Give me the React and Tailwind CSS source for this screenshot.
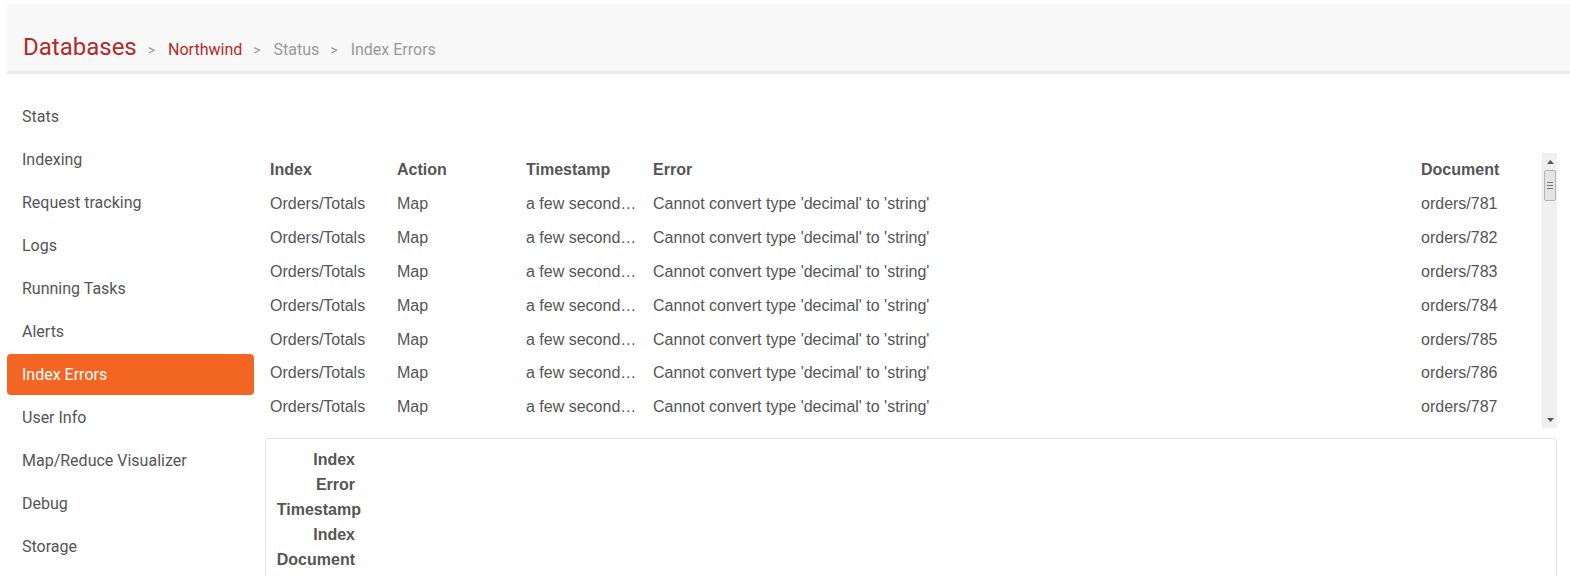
import React from "react";

const navItems = [
  "Stats",
  "Indexing",
  "Request tracking",
  "Logs",
  "Running Tasks",
  "Alerts",
  "Index Errors",
  "User Info",
  "Map/Reduce Visualizer",
  "Debug",
  "Storage",
];

const errors = [781, 782, 783, 784, 785, 786, 787].map((n) => ({
  index: "Orders/Totals",
  action: "Map",
  timestamp: "a few seconds ago",
  error: "Cannot convert type 'decimal' to 'string'",
  document: `orders/${n}`,
}));

function Sep() {
  return <span className="text-[14px] text-[#999] ml-[11px] mr-[13px]">&gt;</span>;
}

function Breadcrumb() {
  return (
    <div className="ml-[7px] mt-[5px] h-[69px] bg-[#f8f8f8] border-b-[3px] border-[#ebebeb] rounded-tl-[3px] flex items-baseline pt-[30px] pl-4 font-['Roboto',sans-serif]">
      <span className="text-[24px] leading-none text-[#b22a2a]">Databases</span>
      <Sep />
      <span className="text-[16px] leading-none text-[#b22a2a]">Northwind</span>
      <Sep />
      <span className="text-[16px] leading-none text-[#999]">Status</span>
      <Sep />
      <span className="text-[16px] leading-none text-[#999]">Index Errors</span>
    </div>
  );
}

function SideNav() {
  return (
    <nav className="w-[247px] ml-[7px] pt-[22px] flex flex-col gap-[2px] font-['Roboto',sans-serif] text-[16px]">
      {navItems.map((item) => (
        <div
          key={item}
          className={`h-[41px] flex items-center px-[15px] rounded-[4px] ${
            item === "Index Errors" ? "bg-[#f26522] text-white" : "text-[#555]"
          }`}
        >
          {item}
        </div>
      ))}
    </nav>
  );
}

function Scrollbar() {
  return (
    <div className="w-[15px] bg-[#f0f0f0] flex flex-col border-l border-[#e8e8e8]">
      <div className="h-[17px] flex items-center justify-center">
        <svg width="7" height="4" viewBox="0 0 7 4"><path d="M3.5 0L7 4H0z" fill="#555" /></svg>
      </div>
      <div className="h-[31px] mx-[1px] bg-[#e4e4e4] border border-[#b5b5b5] rounded-[2px] flex flex-col items-center justify-center gap-[2px]">
        <div className="w-[6px] h-px bg-[#777]" />
        <div className="w-[6px] h-px bg-[#777]" />
        <div className="w-[6px] h-px bg-[#777]" />
      </div>
      <div className="flex-1" />
      <div className="h-[17px] flex items-center justify-center">
        <svg width="7" height="4" viewBox="0 0 7 4"><path d="M0 0H7L3.5 4z" fill="#555" /></svg>
      </div>
    </div>
  );
}

function ErrorTable() {
  const cols = "grid grid-cols-[127px_129px_127px_1fr_121px]";
  return (
    <div className="flex h-[275px] font-['Liberation_Sans',Arial,sans-serif] text-[16px] text-[#555]">
      <div className="flex-1 pl-[8px] overflow-hidden">
        <div className={`${cols} h-[33px] items-center font-bold`}>
          <div>Index</div>
          <div>Action</div>
          <div>Timestamp</div>
          <div>Error</div>
          <div>Document</div>
        </div>
        {errors.map((e) => (
          <div key={e.document} className={`${cols} h-[33.8px] items-center pt-[3px]`}>
            <div>{e.index}</div>
            <div>{e.action}</div>
            <div className="truncate pr-[13px]">{e.timestamp}</div>
            <div>{e.error}</div>
            <div>{e.document}</div>
          </div>
        ))}
      </div>
      <Scrollbar />
    </div>
  );
}

function ErrorDetails() {
  const labels = ["Index", "Error", "Timestamp", "Index", "Document"];
  return (
    <div className="mt-[10px] ml-[3px] border border-[#e5e5e5] rounded-[4px] pt-[8px] pb-[10px] font-['Liberation_Sans',Arial,sans-serif] text-[16px] font-bold text-[#555]">
      <div className="w-[89px] flex flex-col items-end">
        {labels.map((l, i) => (
          <div key={i} className={`h-[25px] leading-[25px] ${l === "Timestamp" ? "mr-[-6px]" : ""}`}>
            {l}
          </div>
        ))}
      </div>
    </div>
  );
}

export default function App() {
  return (
    <div className="w-[1570px] h-[576px] overflow-hidden bg-white">
      <Breadcrumb />
      <div className="flex">
        <SideNav />
        <main className="ml-[8px] w-[1295px] pt-[79px]">
          <ErrorTable />
          <ErrorDetails />
        </main>
      </div>
    </div>
  );
}
